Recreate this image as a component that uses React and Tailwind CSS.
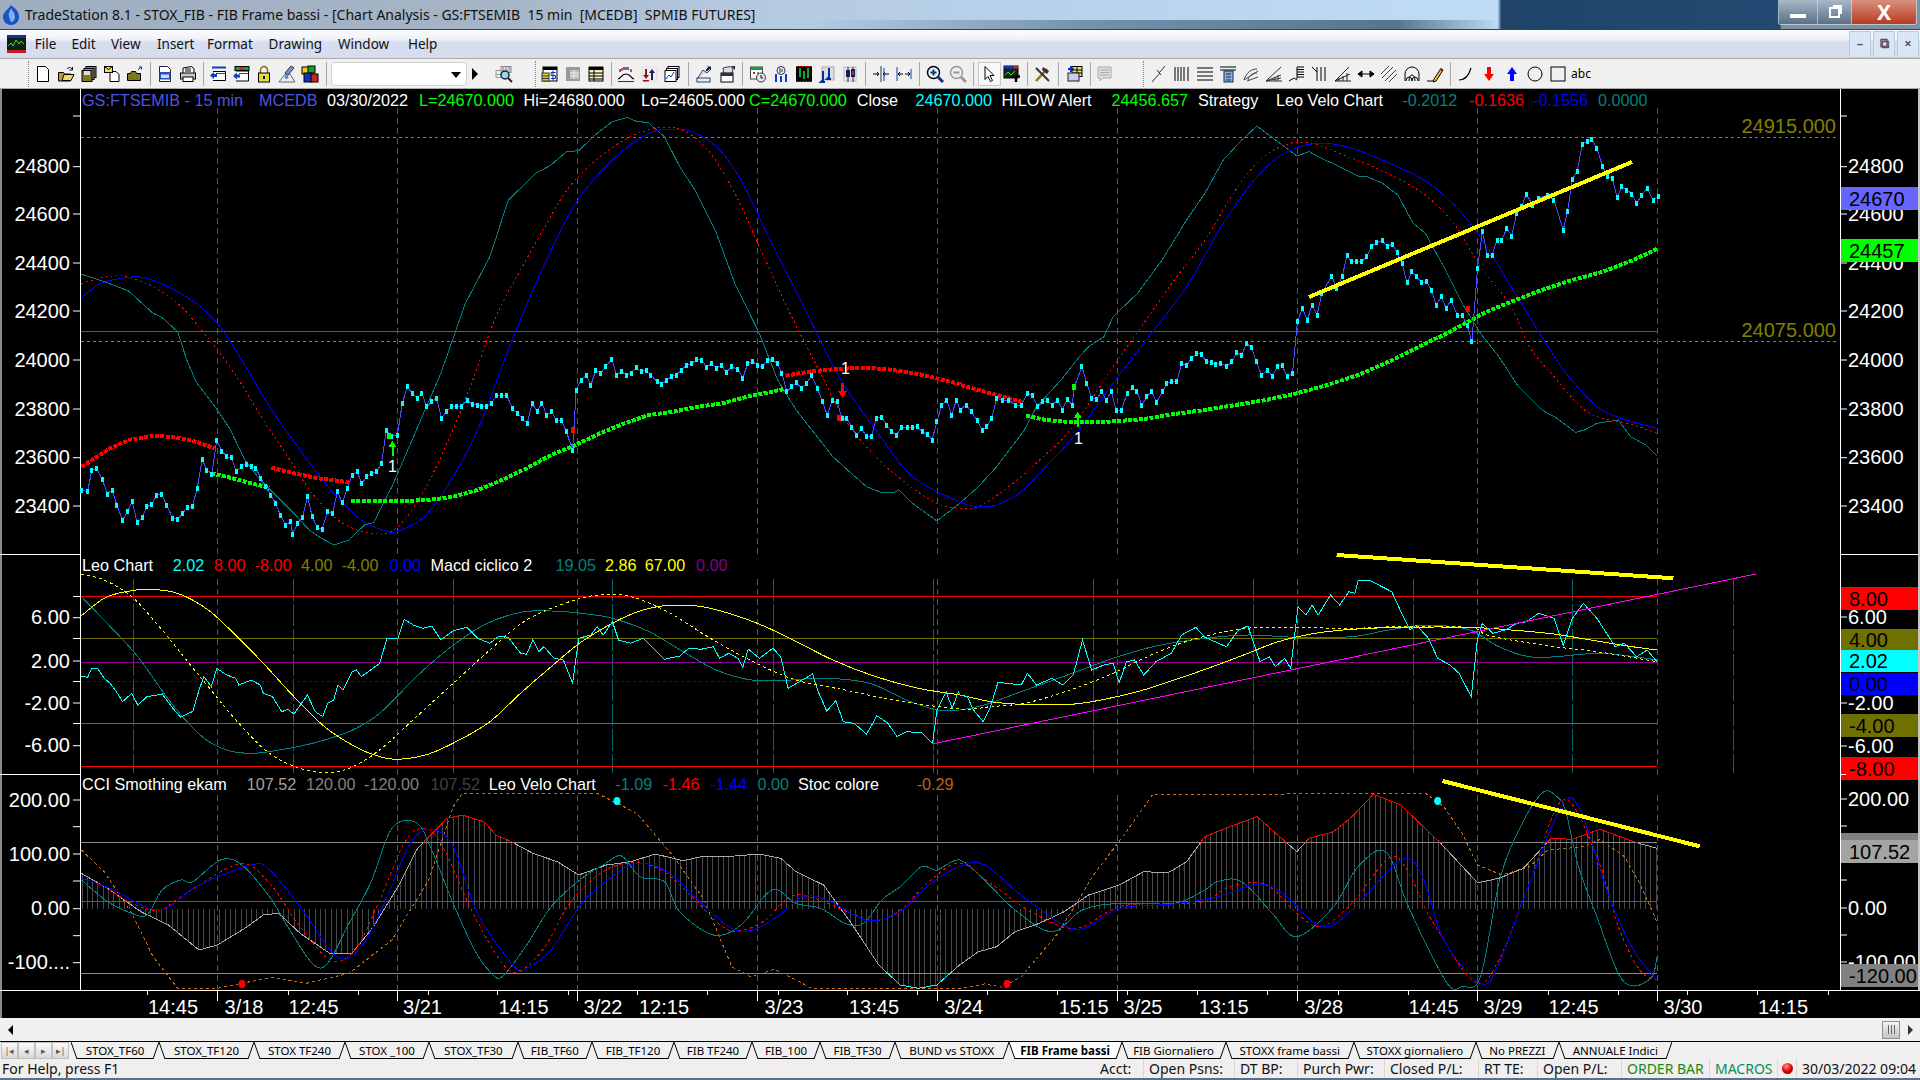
import React from 'react';

// chart traces, read off the reference as [u, v] pairs per half of the window
const toPts = (left, right, y0) => {
  const out = [];
  for (let i = 0; i < left.length; i += 2) out.push([left[i] / 1.633, y0 + left[i + 1] / 3]);
  for (let i = 0; i < right.length; i += 2) out.push([960 + right[i] / 1.633, y0 + right[i + 1] / 3]);
  return out;
};
const line = (p) => p.map((q) => q[0].toFixed(1) + ',' + q[1].toFixed(1)).join(' ');
const smooth = (p) => {
  let d = `M${p[0][0]} ${p[0][1]}`;
  for (let i = 0; i < p.length - 1; i++) {
    const a = p[Math.max(i - 1, 0)], b = p[i], c = p[i + 1], e = p[Math.min(i + 2, p.length - 1)];
    d += `C${b[0] + (c[0] - a[0]) / 6} ${b[1] + (c[1] - a[1]) / 6} ${c[0] - (e[0] - b[0]) / 6} ${c[1] - (e[1] - b[1]) / 6} ${c[0]} ${c[1]}`;
  }
  return d;
};

const Y1 = 90, Y2 = 550;

const tealTop = toPts(
  [133,553,175,578,210,603,250,670,265,683,290,725,305,810,320,875,355,960,375,1015,400,1110,425,1170,450,1215,480,1270,505,1320,525,1345,545,1365,570,1350,595,1305,610,1298,640,1190,680,1020,720,850,760,640,800,500,830,330,850,295,875,250,900,225,925,185,945,182,975,130,1000,95,1025,82,1040,95,1058,97,1085,140,1110,230,1135,300,1170,430,1200,580,1240,730,1270,870,1300,960,1330,1030,1360,1100,1390,1150,1415,1190,1440,1208,1460,1208,1468,1200,1490,1240,1530,1293,1567,1240],
  [30,1190,60,1130,105,1020,125,950,165,870,195,800,210,770,235,740,250,680,290,610,330,510,370,390,400,310,430,210,460,150,485,108,515,150,550,198,570,185,590,205,620,230,650,258,665,260,690,280,715,315,740,400,760,430,790,530,820,640,850,730,880,800,910,885,950,960,975,985,1005,1027,1020,1020,1040,1000,1075,990,1095,1040,1120,1065,1138,1098], Y1);
const redTop = toPts(
  [133,580,175,560,205,560,250,590,290,640,320,700,355,780,390,870,430,990,470,1100,510,1210,560,1300,615,1332,650,1310,690,1210,730,1060,770,880,810,680,850,540,890,410,930,290,980,200,1030,140,1080,112,1120,125,1160,190,1200,310,1240,470,1290,670,1340,850,1380,990,1430,1100,1480,1180,1530,1240,1567,1255],
  [30,1250,80,1190,130,1110,180,1020,250,830,300,700,350,570,400,450,450,300,490,210,530,165,570,158,620,190,680,235,730,280,770,330,810,410,850,530,900,650,930,770,970,860,1020,960,1060,990,1100,1005,1138,1030], Y1);
const blueTop = toPts(
  [133,622,165,580,205,563,235,563,280,595,320,640,355,700,395,810,440,950,490,1080,540,1200,590,1290,630,1323,650,1323,690,1285,730,1190,780,1020,830,780,880,560,940,340,1000,210,1060,130,1100,118,1130,125,1170,170,1210,270,1260,460,1310,640,1370,860,1430,1020,1490,1160,1567,1235],
  [30,1250,60,1245,100,1205,140,1130,190,1030,250,880,300,760,370,590,430,400,490,250,540,180,590,160,640,175,720,235,770,285,820,370,860,470,900,590,950,740,990,850,1040,950,1080,985,1138,1015], Y1);
const price = toPts(
  [133,1200,143,1205,150,1140,158,1135,167,1168,175,1212,183,1200,191,1247,200,1290,208,1265,216,1235,224,1298,232,1283,240,1250,248,1243,256,1215,264,1212,272,1245,282,1285,290,1288,298,1270,306,1252,314,1250,322,1195,330,1108,338,1140,346,1152,354,1050,362,1083,370,1100,378,1103,386,1145,394,1130,402,1122,410,1130,418,1135,426,1165,434,1190,442,1215,450,1240,458,1275,466,1305,474,1295,478,1332,486,1300,494,1283,502,1220,510,1280,518,1313,526,1317,535,1265,543,1270,551,1205,559,1238,567,1195,575,1155,583,1145,591,1180,599,1160,607,1150,615,1145,623,1120,631,1020,639,1038,649,1035,657,940,665,890,673,910,681,925,689,910,697,950,705,935,713,925,721,985,729,965,737,950,745,950,753,950,763,930,771,943,779,945,787,950,795,950,803,940,811,915,819,915,827,915,837,955,845,970,853,985,861,1000,869,940,877,965,885,940,893,975,901,965,909,992,917,992,925,1025,935,1080,941,900,949,870,957,855,965,885,973,840,981,850,989,830,999,808,1007,855,1015,845,1023,855,1031,850,1039,832,1047,845,1055,840,1063,855,1073,875,1081,882,1089,870,1097,858,1105,855,1113,840,1121,825,1130,820,1138,808,1146,810,1154,832,1162,820,1170,835,1178,825,1186,848,1194,830,1205,838,1213,865,1221,820,1229,815,1237,825,1245,830,1253,810,1261,808,1269,820,1277,850,1285,905,1293,890,1301,878,1309,895,1317,880,1325,857,1335,895,1343,935,1351,975,1359,932,1367,935,1375,985,1383,985,1391,1012,1399,1035,1407,1015,1415,1040,1423,1040,1431,985,1440,982,1448,1005,1456,1025,1464,1035,1472,1012,1482,1012,1490,1012,1498,1010,1506,1025,1514,1032,1522,1050,1530,995,1538,945,1546,930,1554,975,1562,930],
  [0,960,10,945,18,965,28,990,36,1020,44,1010,52,985,60,925,70,930,80,930,90,945,100,945,110,910,118,915,127,950,135,935,143,932,151,945,159,930,167,960,175,928,183,945,187,890,199,830,207,880,215,925,223,928,231,905,239,930,247,905,255,962,263,962,273,910,281,893,289,905,297,945,305,920,313,905,321,937,330,905,338,880,346,873,354,875,362,820,370,827,378,805,386,790,394,793,402,815,410,817,418,822,426,820,436,830,444,815,452,788,460,795,468,760,476,773,484,815,492,855,502,840,510,858,518,830,526,825,534,860,543,850,551,695,559,655,567,690,575,645,583,675,591,610,607,558,615,595,624,560,632,497,640,515,648,515,656,515,664,500,672,470,680,458,690,452,698,470,706,462,714,488,722,520,730,578,738,545,746,560,754,578,762,575,770,600,778,645,786,620,794,655,802,630,812,675,820,675,828,705,836,755,845,535,853,425,861,495,869,495,877,450,885,450,893,415,901,438,909,370,917,350,925,312,935,345,945,325,960,315,970,330,985,420,992,365,1000,268,1008,243,1016,162,1024,155,1032,147,1040,175,1049,228,1057,260,1065,265,1073,322,1081,290,1089,300,1097,312,1105,340,1113,315,1122,295,1132,330,1140,320], Y1);
const greenA = toPts([345,1150,380,1165,410,1180,440,1193], [], Y1);
const greenB = toPts([573,1233,660,1233,700,1230,740,1220,780,1200,820,1170,860,1135,900,1095,940,1065,980,1030,1020,1000,1060,975,1100,965,1140,950,1180,940,1220,920,1260,905,1280,897], [], Y1);
const greenC = toPts([], [108,977,140,990,185,997,220,997,260,993,300,987,350,972,400,960,450,945,500,930,550,910,600,885,650,855,700,815,750,770,800,725,830,695,860,665,900,635,950,600,1000,570,1050,545,1100,510,1140,475], Y1);
const redA = toPts([133,1130,150,1110,180,1075,210,1050,240,1040,260,1038,290,1043,320,1055,350,1075], [], Y1);
const redB = toPts([443,1133,480,1150,520,1165,570,1177], [], Y1);
const redC = toPts([1283,857,1320,845,1360,838,1410,833,1450,838,1500,852,1540,870,1567,882], [0,885,50,910,100,935], Y1);

const yelSolid = toPts(
  [133,197,170,145,205,125,245,118,290,130,340,180,390,265,430,340,480,440,530,530,580,590,620,620,650,628,700,612,750,570,800,515,850,430,900,350,950,275,1010,210,1060,175,1110,165,1160,175,1230,215,1290,265,1360,330,1430,380,1500,415,1567,435],
  [50,455,100,463,180,463,230,450,290,425,350,390,420,345,470,310,520,275,580,250,640,238,720,232,830,232,900,240,970,252,1030,270,1090,288,1138,300], Y2);
const yelDash = toPts(
  [133,72,170,90,215,140,260,230,300,320,340,410,390,520,440,610,490,655,530,667,570,655,620,600,680,500,740,400,800,300,860,210,930,155,980,135,1030,140,1090,185,1160,265,1230,335,1300,390,1380,420,1460,450,1567,477],
  [50,470,110,458,180,420,250,370,300,325,360,280,420,250,480,233,560,233,640,235,720,230,830,232,860,255,900,270,970,290,1040,305,1138,335], Y2);
const tealMid = toPts(
  [133,140,175,220,225,320,280,460,330,560,370,600,410,610,450,602,510,580,570,545,620,490,680,380,730,300,790,225,850,187,900,183,950,190,1000,205,1060,245,1120,310,1170,360,1220,388,1270,392,1350,385,1420,400,1480,450,1530,480,1567,480],
  [40,465,100,425,180,372,250,325,320,288,400,265,470,255,550,262,640,260,700,240,760,226,830,238,880,290,940,322,1040,310,1100,320,1138,330], Y2);
const cyanMid = toPts(
  [133,378,143,382,150,355,160,357,170,385,180,400,190,425,200,455,215,430,225,465,240,440,265,432,280,470,295,502,315,484,325,420,333,380,345,410,354,355,370,375,385,385,390,405,410,390,425,405,430,430,445,440,460,485,470,478,480,492,502,435,515,485,527,500,535,460,545,450,552,405,560,420,575,365,582,360,590,380,605,360,620,340,632,265,650,265,660,208,675,225,690,235,705,228,720,270,740,242,762,232,780,265,800,280,815,258,830,262,850,310,860,313,870,270,880,305,888,290,905,325,920,330,935,400,945,265,965,255,975,230,985,255,1000,215,1010,270,1030,280,1050,265,1070,300,1085,328,1110,318,1125,295,1145,298,1165,290,1175,325,1190,310,1205,325,1213,352,1222,297,1240,325,1262,295,1275,320,1287,415,1310,390,1327,372,1335,420,1350,483,1365,452,1377,515,1395,520,1415,553,1432,497,1450,520,1465,560,1480,545,1505,548,1523,580,1530,480,1545,425,1555,475,1565,425],
  [0,435,12,440,22,480,38,515,50,470,62,397,100,405,110,370,125,405,150,385,168,405,185,375,200,270,215,360,235,345,250,340,260,398,272,335,285,330,300,375,320,335,345,310,362,255,385,232,400,262,435,290,455,240,470,228,490,335,505,320,515,350,530,325,540,355,552,170,565,195,575,165,585,195,605,135,620,165,635,125,645,130,650,92,670,92,705,125,725,205,735,240,745,225,765,265,780,325,800,345,815,370,835,440,845,265,853,220,870,250,890,240,910,220,925,215,945,190,970,205,985,285,1000,205,1018,160,1040,205,1070,290,1085,280,1105,320,1122,300,1138,335], Y2);

const cci = toPts(
  [133,970,180,1020,230,1085,275,1125,325,1200,355,1185,400,1135,430,1095,455,1090,490,1150,540,1212,575,1210,610,1130,650,1010,680,900,700,860,730,805,755,795,790,815,810,855,835,875,870,910,910,935,945,975,990,945,1030,935,1070,912,1115,932,1145,920,1200,918,1240,912,1275,925,1300,965,1345,1005,1390,1120,1435,1245,1470,1305,1500,1315,1530,1305,1567,1245],
  [30,1205,60,1190,90,1145,130,1120,170,1085,210,1035,260,1005,300,965,340,968,370,935,400,860,440,830,485,800,550,905,570,865,610,845,640,800,675,733,720,765,785,880,845,998,880,985,920,955,965,865,1000,868,1045,838,1105,878,1138,895], Y2);
const tealLow = toPts(
  [133,990,155,1025,180,1060,215,1090,240,1095,265,1020,295,990,315,995,360,930,395,945,440,1040,470,1130,510,1240,535,1240,570,1120,605,1000,640,835,680,818,705,900,740,1060,775,1200,800,1265,820,1280,860,1185,900,1070,950,985,985,945,1015,918,1045,980,1085,995,1110,1085,1165,1155,1210,1125,1250,1035,1270,1020,1300,1060,1340,1075,1380,1120,1410,1120,1440,1050,1470,1010,1505,950,1530,960,1567,930],
  [40,990,90,1080,150,1145,200,1080,260,1060,350,1060,400,1020,420,995,460,995,510,1090,550,1160,610,1070,650,950,695,905,730,1060,770,1215,800,1310,820,1310,850,1280,880,1000,910,850,950,730,975,740,990,790,1010,950,1040,1100,1075,1270,1100,1308,1130,1280,1138,1220], Y2);
const redLow = toPts(
  [133,985,170,1010,215,1060,260,1080,300,1035,390,942,440,1000,490,1130,540,1230,580,1200,620,1050,660,880,690,835,720,880,770,1080,820,1240,850,1262,890,1190,930,1060,980,970,1030,938,1080,960,1130,1040,1180,1130,1210,1142,1250,1110,1290,1040,1330,1045,1390,1090,1430,1112,1470,1080,1520,990,1567,940],
  [50,1000,120,1090,190,1135,260,1070,350,1060,400,1055,440,1010,500,1005,550,1090,590,1130,640,1060,700,925,730,960,770,1110,840,1295,880,1230,930,1000,985,750,1040,920,1075,1130,1110,1260,1138,1290], Y2);
const blueLow = toPts(
  [133,985,180,1015,260,1080,320,1010,410,945,440,960,490,1070,550,1220,590,1190,630,1050,670,880,705,838,740,890,780,1090,840,1250,860,1255,900,1200,950,1060,1000,980,1040,940,1090,965,1140,1050,1190,1130,1225,1142,1270,1100,1310,1040,1350,1050,1400,1100,1430,1112,1470,1085,1520,1000,1567,950],
  [40,945,110,1050,190,1138,260,1075,350,1062,420,1040,490,1002,530,1035,590,1130,640,1080,720,930,755,980,790,1170,850,1300,880,1240,930,1000,985,760,1015,790,1060,1040,1100,1200,1138,1290], Y2);
const stoc = toPts(
  [133,900,170,965,215,1090,250,1220,290,1315,355,1315,395,1300,445,1282,500,1300,570,1270,640,1170,700,990,740,770,755,730,975,730,1040,790,1100,920,1150,1050,1195,1250,1225,1280,1265,1258,1300,1290,1325,1315,1567,1315],
  [40,1302,70,1312,100,1280,160,1150,220,970,270,850,315,733,500,733,600,730,760,730,790,770,820,850,845,945,885,975,930,950,960,900,1020,890,1045,868,1085,920,1110,1000,1138,1115], Y2);

const histBars = () => {
  const bars = [];
  let j = 0;
  for (let x = 82; x < 1657; x += 5.3) {
    while (j < cci.length - 2 && cci[j + 1][0] < x) j++;
    const a = cci[j], b = cci[j + 1];
    const y = a[1] + ((b[1] - a[1]) * (x - a[0])) / (b[0] - a[0] || 1);
    bars.push([x, y]);
  }
  return bars;
};

const dayX = [217, 397, 577, 757, 937, 1117, 1297, 1477, 1657];
const tealX = [133, 293, 453, 612, 773, 933, 1093, 1253, 1413, 1572, 1733];

const legend1 = [
  [82, 'GS:FTSEMIB - 15 min', '#4f55e0'], [259, 'MCEDB', '#4f55e0'], [327, '03/30/2022', '#fff'], [419, 'L=24670.000', '#0f0'],
  [523.5, 'Hi=24680.000', '#fff'], [641, 'Lo=24605.000', '#fff'], [749, 'C=24670.000', '#0f0'], [856.7, 'Close', '#fff'],
  [915.5, '24670.000', '#0ff'], [1001.6, 'HILOW Alert', '#fff'], [1111.4, '24456.657', '#0f0'], [1198, 'Strategy', '#fff'],
  [1276, 'Leo Velo Chart', '#fff'], [1402.4, '-0.2012', '#008080'], [1469, '-0.1636', '#f00'], [1533, '-0.1556', '#00f'], [1598, '0.0000', '#008080'],
];
const legend2 = [
  [82, 'Leo Chart', '#fff'], [172.7, '2.02', '#0ff'], [214, '8.00', '#f00'], [254.7, '-8.00', '#f00'], [301, '4.00', '#808000'],
  [341.7, '-4.00', '#808000'], [389.5, '0.00', '#00f'], [430.5, 'Macd ciclico 2', '#fff'], [555.4, '19.05', '#008080'],
  [605, '2.86', '#ff0'], [644.8, '67.00', '#ff0'], [696, '0.00', '#800080'],
];
const legend3 = [
  [82, 'CCI Smothing ekam', '#fff'], [246.8, '107.52', '#a0a0a0'], [306, '120.00', '#808080'], [364, '-120.00', '#808080'],
  [430.5, '107.52', '#404040'], [488.7, 'Leo Velo Chart', '#fff'], [615.4, '-1.09', '#008080'], [662.6, '-1.46', '#f00'],
  [710, '-1.44', '#00f'], [757.5, '0.00', '#008080'], [798, 'Stoc colore', '#fff'], [916.7, '-0.29', '#c06010'],
];

const Legend = ({ items, y }) => items.map((t, i) => <text key={i} x={t[0]} y={y} fontSize="16.2" fill={t[2]}>{t[1]}</text>);
const AxisL = ({ items }) => items.map((t, i) => (
  <g key={i}>
    <text x="70" y={t[1] + 6.5} fontSize="20" fill="#fff" textAnchor="end">{t[0]}</text>
    <line x1="73" x2="80" y1={t[1]} y2={t[1]} stroke="#fff" />
  </g>
));
const AxisR = ({ items }) => items.map((t, i) => (
  <g key={i}>
    <line x1="1840" x2="1847" y1={t[1]} y2={t[1]} stroke="#fff" />
    {t[0] && <text x="1848" y={t[1] + 6.5} fontSize="20" fill="#fff">{t[0]}</text>}
  </g>
));
const Box = ({ y, h, fill, children, ink = '#000' }) => (
  <g>
    <rect x="1841" y={y} width="77" height={h} fill={fill} />
    <text x="1849" y={y + h / 2 + 7} fontSize="20" fill={ink}>{children}</text>
  </g>
);
const Dots = ({ p, color }) => <polyline points={line(p)} fill="none" stroke={color} strokeWidth="4" strokeDasharray="4 1.4" />;
const Grid = ({ y1, y2 }) => dayX.map((x) => <line key={x} x1={x} x2={x} y1={y1} y2={y2} stroke="#555" strokeDasharray="6 4" />);
const Hline = ({ y, c, x2 = 1657, dash }) => <line x1="81" x2={x2} y1={y} y2={y} stroke={c} strokeDasharray={dash} />;
const Arrow = ({ x, y, up, c }) => (
  <path d={up ? `M${x} ${y}l-4 6h3v9h2v-9h3z` : `M${x} ${y + 15}l-4.5 -7h3v-8h3v8h3z`} fill={c} />
);
const Mark = ({ x, y, c }) => <rect x={x - 2} y={y - 3} width="4" height="6" fill={c} />;
const Edges = ({ y, h }) => (
  <>
    <rect x="0" y={y} width="2" height={h} fill="#8a8a8a" />
    <rect x="1918" y={y} width="2" height={h} fill="#c8c8c8" />
    <line x1="80" x2="80" y1={y} y2={y + h} stroke="#fff" />
    <line x1="1840" x2="1840" y1={y} y2={y + h} stroke="#fff" />
  </>
);

function PricePane() {
  return (
    <svg className="block h-[466px] w-full shrink-0" viewBox="0 89 1920 466" shapeRendering="crispEdges">
      <Edges y={89} h={466} />
      <Grid y1={108} y2={555} />
      <Hline y={137.5} c="#8a8a00" x2={1836} dash="3 3" />
      <Hline y={341.5} c="#8a8a00" x2={1836} dash="3 3" />
      <Hline y={331.5} c="#008080" />
      <polyline points={line(tealTop)} fill="none" stroke="#008080" />
      <path d={smooth(redTop)} fill="none" stroke="#f00" strokeDasharray="2 3" />
      <path d={smooth(blueTop)} fill="none" stroke="#0000ff" />
      <Dots p={greenA} color="#0f0" />
      <Dots p={greenB} color="#0f0" />
      <Dots p={greenC} color="#0f0" />
      <Dots p={redA} color="#f00" />
      <Dots p={redB} color="#f00" />
      <Dots p={redC} color="#f00" />
      <polyline points={line(price)} fill="none" stroke="#4a4aff" />
      {price.map((q, i) => <rect key={i} x={q[0] - 1.5} y={q[1] - 2.5} width="3" height="5" fill="#0ff" />)}
      <line x1="1309" y1="297" x2="1632" y2="162" stroke="#ff0" strokeWidth="4" />
      <Arrow x={392.5} y={441} up c="#0f0" />
      <Arrow x={1077.6} y={412} up c="#0f0" />
      <Arrow x={842.6} y={383} c="#f00" />
      <Mark x={389} y={436} c="#0f0" />
      <Mark x={1074} y={387} c="#0f0" />
      <Mark x={839} y={418} c="#f00" />
      <Mark x={1468} y={309} c="#f00" />
      <Mark x={572.6} y={430} c="#f00" />
      <g shapeRendering="auto">
        <text x="388" y="472" fontSize="16" fill="#fff">1</text>
        <text x="1074" y="444" fontSize="16" fill="#fff">1</text>
        <text x="841" y="374" fontSize="16" fill="#fff">1</text>
        <Legend items={legend1} y={105.5} />
        <text x="1836" y="133" fontSize="20" fill="#808000" textAnchor="end">24915.000</text>
        <text x="1836" y="337" fontSize="20" fill="#808000" textAnchor="end">24075.000</text>
        <AxisL items={[['24800', 166.7], ['24600', 214], ['24400', 263], ['24200', 311], ['24000', 360], ['23800', 409], ['23600', 457.7], ['23400', 506], ['', 116]]} />
        <AxisR items={[['24800', 166.7], ['24600', 214], ['24400', 263], ['24200', 311], ['24000', 360], ['23800', 409], ['23600', 457.7], ['23400', 506], ['', 116]]} />
        <Box y={187} h={23} fill="#6666ff">24670</Box>
        <Box y={239} h={23} fill="#00ff00">24457</Box>
      </g>
      <line x1="0" x2="80" y1="554.5" y2="554.5" stroke="#fff" />
      <line x1="1840" x2="1918" y1="554.5" y2="554.5" stroke="#fff" />
    </svg>
  );
}

function MacdPane() {
  return (
    <svg className="block h-[220px] w-full shrink-0 overflow-visible" viewBox="0 555 1920 220" shapeRendering="crispEdges">
      <Edges y={555} h={220} />
      <Grid y1={579} y2={775} />
      {tealX.map((x) => <line key={x} x1={x} x2={x} y1={579} y2={773} stroke="#006a6a" strokeDasharray="22 3" />)}
      <Hline y={596.5} c="#f00" />
      <Hline y={638.5} c="#707000" />
      <Hline y={662.5} c="#900090" />
      <Hline y={681.5} c="#0000ff" dash="3 3" />
      <Hline y={723.5} c="#707000" />
      <Hline y={766.5} c="#f00" />
      <path d={smooth(tealMid)} fill="none" stroke="#008080" />
      <path d={smooth(yelSolid)} fill="none" stroke="#ff0" />
      <path d={smooth(yelDash)} fill="none" stroke="#ff0" strokeDasharray="3 3" />
      <polyline points={line(cyanMid)} fill="none" stroke="#0ff" />
      <line x1="932" y1="744" x2="1756" y2="574" stroke="#f0f" />
      <line x1="1336.6" y1="555" x2="1673.4" y2="578.3" stroke="#ff0" strokeWidth="4" />
      <g shapeRendering="auto">
        <Legend items={legend2} y={571} />
        <AxisL items={[['6.00', 617.7], ['2.00', 661], ['-2.00', 703], ['-6.00', 745.7], ['', 596.5], ['', 638.5], ['', 681.5], ['', 723.5]]} />
        <AxisR items={[['6.00', 617], ['-2.00', 703], ['-6.00', 746]]} />
        <Box y={587} h={23} fill="#f00">8.00</Box>
        <Box y={629} h={21} fill="#707000">4.00</Box>
        <Box y={650} h={22} fill="#0ff">2.02</Box>
        <Box y={673} h={22} fill="#00f">0.00</Box>
        <Box y={714} h={23} fill="#707000">-4.00</Box>
        <Box y={757} h={23} fill="#f00">-8.00</Box>
      </g>
      <line x1="0" x2="80" y1="774.5" y2="774.5" stroke="#fff" />
      <line x1="1840" x2="1846" y1="774.5" y2="774.5" stroke="#fff" />
    </svg>
  );
}

function CciPane() {
  return (
    <svg className="block h-[215px] w-full shrink-0" viewBox="0 775 1920 215" shapeRendering="crispEdges">
      <defs>
        <clipPath id="above"><rect x="0" y="775" width="1920" height="67.7" /></clipPath>
        <clipPath id="below"><rect x="0" y="973" width="1920" height="20" /></clipPath>
      </defs>
      <Edges y={775} h={215} />
      <Grid y1={795} y2={990} />
      {histBars().map((b, i) => <line key={i} x1={b[0]} x2={b[0]} y1={908.7} y2={b[1]} stroke="#484848" />)}
      <Hline y={842.5} c="#8a8a8a" />
      <Hline y={973.5} c="#8a8a8a" />
      <Hline y={901.5} c="#008080" />
      <polyline points={line(stoc)} fill="none" stroke="#d06a10" strokeDasharray="3 3" />
      <polyline points={line(cci)} fill="none" stroke="#a8a8a8" />
      <polyline points={line(cci)} fill="none" stroke="#f00" clipPath="url(#above)" />
      <polyline points={line(cci)} fill="none" stroke="#0ff" clipPath="url(#below)" />
      <path d={smooth(tealLow)} fill="none" stroke="#008080" />
      <path d={smooth(redLow)} fill="none" stroke="#f00" strokeDasharray="3 3" />
      <path d={smooth(blueLow)} fill="none" stroke="#0000ff" />
      <line x1="1442.5" y1="781" x2="1699.7" y2="846.3" stroke="#ff0" strokeWidth="4" />
      <g shapeRendering="auto">
        <ellipse cx="617" cy="801" rx="3.5" ry="4" fill="#0ff" />
        <ellipse cx="1437.7" cy="801" rx="3.5" ry="4" fill="#0ff" />
        <ellipse cx="242" cy="984" rx="3.5" ry="4" fill="#f00" />
        <ellipse cx="1007" cy="984" rx="3.5" ry="4" fill="#f00" />
        <Legend items={legend3} y={790} />
        <AxisL items={[['200.00', 800], ['100.00', 854], ['0.00', 908.7], ['-100....', 962.7], ['', 826.7], ['', 881], ['', 935.7]]} />
        <AxisR items={[['200.00', 799], ['', 826], ['', 880], ['0.00', 908], ['', 935], ['-100.00', 962]]} />
        <rect x="1841" y="833" width="77" height="7" fill="#808080" />
        <Box y={840} h={23} fill="#a4a4a4">107.52</Box>
        <Box y={964} h={23} fill="#808080">-120.00</Box>
      </g>
    </svg>
  );
}

const timeTicks = [147, 217, 288, 358, 397, 428, 497, 568, 577, 637, 707, 757, 778, 847, 917, 937, 987, 1057, 1117, 1127, 1197, 1267, 1297, 1338, 1408, 1477, 1548, 1618, 1657, 1687, 1757, 1828];
const timeLabels = [['14:45', 173], ['3/18', 244], ['12:45', 313.5], ['3/21', 422.5], ['14:15', 523.6], ['3/22', 603], ['12:15', 664], ['3/23', 784], ['13:45', 874], ['3/24', 963.7], ['15:15', 1083.7], ['3/25', 1143], ['13:15', 1223.7], ['3/28', 1323.7], ['14:45', 1433.5], ['3/29', 1503], ['12:45', 1573.5], ['3/30', 1683], ['14:15', 1783]];

function TimeAxis() {
  return (
    <svg className="block h-[28px] w-full shrink-0" viewBox="0 990 1920 28">
      <rect x="0" y="990" width="2" height="28" fill="#8a8a8a" />
      <line x1="0" x2="1920" y1="990.5" y2="990.5" stroke="#fff" />
      {timeTicks.map((x) => <line key={x} x1={x} x2={x} y1="990" y2={dayX.includes(x) ? 1001 : 995} stroke="#fff" shapeRendering="crispEdges" />)}
      {timeLabels.map((t, i) => <text key={i} x={t[1]} y="1014" fontSize="20" fill="#fff" textAnchor="middle">{t[0]}</text>)}
    </svg>
  );
}

// toolbar glyphs, 18x18
const S = { fill: 'none', stroke: '#000' };
const icons = {
  newDoc: <><path d="M3.5 1.5h8l3 3v12h-11z" fill="#fff" stroke="#000" /></>,
  open: <><path d="M1.5 7.5h5l1 1.5h6v7h-12z" fill="#b8a030" stroke="#000" /><path d="M5 15.5l2-6h10l-3 6z" fill="#e8d870" stroke="#000" /><path d="M10 4c2-2 4-2 5 0M15.5 2v3h-3" {...S} /></>,
  saveAll: <><rect x="6" y="1.5" width="10" height="11" fill="#888" stroke="#000" /><rect x="4" y="3.5" width="10" height="11" fill="#999" stroke="#000" /><rect x="2" y="5.5" width="10" height="11" fill="#807820" stroke="#000" /><rect x="4" y="6" width="6" height="4" fill="#ddd" /></>,
  docs: <><path d="M7 6.5h6l3 3v7H7z" fill="#fff" stroke="#000" /><rect x="1.5" y="1.5" width="8" height="6" fill="#f0e060" stroke="#000" /><path d="M1.5 1.5l4 3 4-3" {...S} /></>,
  box: <><path d="M1.5 8.500h3l1-2h4l1 2h4v7h-13z" fill="#807820" stroke="#000" /><path d="M12 5l3-3M13 2h2.5v2.5" fill="none" stroke="#0030c0" /></>,
  preview: <><path d="M3.5 1.500h8l3 3v12h-11z" fill="#fff" stroke="#223" /><rect x="3.500" y="7" width="11" height="7.500" fill="#2a50c0" /><rect x="5" y="9.500" width="8" height="3.500" fill="#cde" /></>,
  print: <><path d="M4 8V3l8-1.5 3 2V8" fill="#fff" stroke="#000" /><rect x="1.5" y="8" width="15" height="6" fill="#c8c8c8" stroke="#000" /><rect x="4" y="12" width="10" height="4.5" fill="#fff" stroke="#000" /><path d="M6 4h6M6 6h6" stroke="#000" /></>,
  lines: <><path d="M3 2.5h14" stroke="#1040c0" strokeWidth="2" /><path d="M4 6.500h12.500v9H4" fill="#fff" stroke="#000" /><path d="M7 8.500h9" stroke="#1040c0" /><path d="M1 10.500l4-3.500v2h3v3H5v2z" fill="#1040c0" /></>,
  lines2: <><rect x="3" y="1.500" width="14" height="4" fill="#10a040" stroke="#000" /><rect x="8" y="2" width="4" height="3" fill="#e02020" /><path d="M4 6h12.500v10H4" fill="#fff" stroke="#000" /><path d="M7 8.500h9" stroke="#1040c0" /><path d="M1 11l4-3.500v2h3v3H5v2z" fill="#1040c0" /></>,
  lock: <><path d="M5.5 8V5a3.5 3.5 0 0 1 7 0v3" fill="none" stroke="#807010" strokeWidth="1.5" /><rect x="3.5" y="8" width="11" height="9" fill="#e8d840" stroke="#000" /><rect x="8" y="11" width="2" height="3" fill="#000" /></>,
  pen: <><path d="M1 17L7 9h5l5 8z" fill="#eee" stroke="#667" /><path d="M7 8l6-7 3 2-6 7z" fill="#8090c0" stroke="#334" /><circle cx="8.500" cy="12" r="2" fill="#58c" /></>,
  cubes: <><rect x="1" y="2" width="7" height="7" fill="#e8d020" stroke="#000" /><rect x="7" y="1" width="7" height="7" fill="#10a030" stroke="#000" /><rect x="3" y="8" width="8" height="9" fill="#1030c0" stroke="#000" /><rect x="10" y="9" width="7" height="8" fill="#d02020" stroke="#000" /></>,
  search: <><path d="M1 5.500h7M1 9.500h7M1 5.500v7h7" fill="none" stroke="#999" /><rect x="6" y="1.500" width="10" height="6" fill="#ddd" stroke="#889" /><path d="M8 2v5M11 2v5M14 2v5" stroke="#889" /><circle cx="10" cy="10" r="4" fill="#8fd8f0" stroke="#222" strokeWidth="1.500" /><path d="M13 13l4 4" stroke="#222" strokeWidth="2" /></>,
  dollar: <><rect x="2" y="2" width="14" height="14" fill="#fff" stroke="#000" /><rect x="2" y="2" width="14" height="3" fill="#000" /><rect x="1" y="8" width="7" height="8" fill="#e8d020" stroke="#333" /><path d="M1 11h7M1 13.500h7" stroke="#333" /><path d="M12 5.500v10M14.500 7.500h-4.500v3h4.500v3h-4.500" fill="none" stroke="#0030c0" /></>,
  grayTable: <><rect x="2" y="2" width="14" height="14" fill="#999" /><rect x="6" y="5" width="9" height="9" fill="#bbb" /><path d="M6 8h9M6 11h9M10 5v9" stroke="#eee" /></>,
  table: <><rect x="2" y="2" width="14" height="14" fill="#f4f0c0" stroke="#000" /><rect x="2" y="2" width="14" height="3" fill="#000" /><path d="M2 8h14M2 11h14M2 14h14M7 5v11" stroke="#000" /></>,
  bars: <><rect x="1.500" y="2" width="15" height="14" fill="#f4f4f4" /><path d="M1 13c3 0 3-5 8-5s5 5 8 5" transform="translate(0 1)" fill="none" stroke="#000" strokeWidth="1.200" /><path d="M3 4v3M7 2v3M11 2v3" stroke="#1040d0" strokeWidth="1.500" /><path d="M5 3v3M9 2v3M14 4v3" stroke="#d01010" strokeWidth="1.500" /><path d="M1 16.500h16" stroke="#333" /></>,
  arrowsV: <><rect x="2" y="2" width="15" height="14" fill="#eee" stroke="#ddd" /><path d="M6 4v7" stroke="#a01010" strokeWidth="2" /><path d="M3 10l3 4 3-4z" fill="#a01010" /><rect x="3" y="15" width="6" height="1.500" fill="#a01010" /><path d="M12 15V8" stroke="#102060" strokeWidth="2" /><path d="M9 8l3-4 3 4z" fill="#102060" /></>,
  windows: <><rect x="5" y="1.5" width="11" height="11" fill="#fff" stroke="#000" /><rect x="3.5" y="3.5" width="11" height="11" fill="#fff" stroke="#000" /><rect x="2" y="5.5" width="11" height="11" fill="#fff" stroke="#000" /><path d="M3 14l3-4 2 2 3-5" stroke="#1040c0" fill="none" /></>,
  chartAdd: <><path d="M2 14l6-9 4 3 4-4" fill="#ddd" stroke="#445" /><path d="M12 1.5h4v4l-1.5-1.5L12 6.5 10.5 5 13 2.5z" fill="#123" /><rect x="2" y="13" width="13" height="4" fill="#def" stroke="#246" /></>,
  chartBox: <><path d="M5 3l7-1.5L15 4l-1 4-8 2z" fill="#ddd" stroke="#345" /><rect x="3" y="8" width="12" height="9" fill="#fff" stroke="#000" /><rect x="3" y="8" width="12" height="3" fill="#333" /><path d="M13 1h4v4z" fill="#123" /></>,
  clock: <><rect x="1.5" y="2" width="12" height="12" fill="#fff" stroke="#444" /><rect x="1.5" y="2" width="12" height="3" fill="#10a040" /><rect x="4" y="7" width="2" height="2" fill="#d02020" /><rect x="8" y="7" width="2" height="2" fill="#888" /><circle cx="12" cy="12.5" r="4.5" fill="#e8e8e8" stroke="#333" /><path d="M12 10v3h2" {...S} /></>,
  mag2: <><circle cx="9" cy="5.5" r="4" fill="#eee" stroke="#334" /><path d="M8 3v5M10 4v3" stroke="#334" /><path d="M4 9v8M9 11v6M14 9v8" stroke="#1040c0" strokeWidth="2" /></>,
  black: <><rect x="1" y="1" width="16" height="16" fill="#000" /><path d="M1 1.500h16M1 16.500h16" stroke="#e01010" strokeDasharray="2 1" /><path d="M5 3v9M9 6v8M13 3v10" stroke="#10e040" strokeWidth="1.500" /></>,
  notes: <><rect x="4" y="2" width="12" height="13" fill="#ddd" stroke="#aaa" /><path d="M5 6v10M5 15l-2 2h4M11 3v10M11 12l-2 2h4" stroke="#0030a0" strokeWidth="2" fill="none" /></>,
  candles: <><rect x="3" y="2" width="12" height="14" fill="#e8e8e8" stroke="#bbb" /><path d="M7 2v15M12 2v15" stroke="#102060" /><rect x="5" y="5" width="4" height="7" fill="#102060" /><rect x="10" y="4" width="4" height="8" fill="#102060" /><rect x="11" y="6" width="2" height="4" fill="#d02020" /></>,
  squeeze: <><path d="M9 1v16" stroke="#334" /><path d="M1 9h6M5 7l2 2-2 2M17 9h-6M13 7l-2 2 2 2" fill="none" stroke="#000" /><path d="M12 3v13" stroke="#1040c0" /></>,
  expand: <><path d="M2 2v14M16 4v10" stroke="#1040c0" /><path d="M3 9h5M5 7l-2 2 2 2M15 9h-5M13 7l2 2-2 2" fill="none" stroke="#000" /></>,
  zoomIn: <><circle cx="7.5" cy="7.5" r="6" fill="#eaf6ff" stroke="#000" strokeWidth="1.5" /><path d="M4.5 7.5h6M7.5 4.5v6" stroke="#103080" strokeWidth="2" /><path d="M12 12l5 5" stroke="#103080" strokeWidth="3" /></>,
  zoomOut: <><circle cx="7.5" cy="7.5" r="6" fill="#eee" stroke="#999" strokeWidth="1.5" /><path d="M4.5 7.5h6" stroke="#999" strokeWidth="2" /><path d="M12 12l5 5" stroke="#999" strokeWidth="3" /></>,
  cursor: <path d="M5 1.5v13l3-3 2.5 5 2-1-2.5-5h4z" fill="#fff" stroke="#000" />,
  chartText: <><rect x="1" y="1" width="14" height="12" fill="#102810" stroke="#000" /><rect x="1" y="1" width="14" height="2.500" fill="#1030c0" /><rect x="11" y="1" width="4" height="2.500" fill="#d02020" /><path d="M2 10l3-3 3 3 4-4" stroke="#30e050" fill="none" /><path d="M9 11.500h8M13 11.500V17" stroke="#000" strokeWidth="2.500" /></>,
  tools: <><path d="M3 16L14 4" stroke="#a07020" strokeWidth="2.5" /><path d="M3 3l13 13" stroke="#333" strokeWidth="2" /><path d="M10 2l6 4-2 3-5-4z" fill="#333" /></>,
  plusTable: <><rect x="6" y="1.5" width="10" height="10" fill="#f4e060" stroke="#000" /><path d="M6 5h10M6 8h10M11 1.5v10" stroke="#000" /><rect x="2" y="8" width="11" height="8" fill="#cce" stroke="#123" /><path d="M5 1v6M2 4h6" stroke="#0030c0" strokeWidth="2" /></>,
  note: <><path d="M2 2h13v11H7l-3 3v-3H2z" fill="#ddd" stroke="#aaa" /><path d="M4 5h9M4 7.5h9M4 10h9" stroke="#aaa" /></>,
  trend: <><path d="M2 17l8-9M9 8l6-7" stroke="#333" /><path d="M7 5l4 5" stroke="#333" /></>,
  vlines: <path d="M2 2v14M5 2v14M8 2v14M11 2v14M15 2v14" stroke="#000" />,
  hlines: <path d="M1 3h16M1 7h16M1 11h16M1 15h16" stroke="#000" />,
  calc: <><path d="M1 2h16M1 5h16" stroke="#000" /><rect x="5" y="6" width="9" height="11" fill="#9ac" stroke="#036" /><path d="M7 9h5M7 12h5M7 15h5" stroke="#036" /></>,
  arc: <path d="M2 15C4 8 9 4 15 4M6 15C7 11 10 8 15 8M2 15l14-9M5 16l11-4" fill="none" stroke="#444" />,
  wedge: <path d="M1 16h16M1 16L16 2M1 16l15-6M1 16l15-3M10 12v4M13 10v6" fill="none" stroke="#333" />,
  fibBars: <><path d="M1 16l5-3 3 2" fill="none" stroke="#000" /><path d="M9 2h7M9 4.5h7M9 7h7M9 9.5h7M9 12h7M9 2v12" stroke="#000" /></>,
  vfib: <path d="M1 2l5 5M6 2v14M10 2v14M14 2v14" fill="none" stroke="#000" />,
  angles: <path d="M1 16h16M1 16L15 2M1 16l15-7M5 16v-3M9 16v-5M13 16v-8" fill="none" stroke="#222" />,
  measure: <path d="M1 9h16M1 9l4-3v6zM17 9l-4-3v6z" fill="#000" stroke="#000" />,
  parallel: <path d="M2 13L13 2M5 16L16 5M1 9l8-8M9 17l8-8" fill="none" stroke="#444" />,
  gann: <><path d="M2 16V9a7 7 0 0 1 14 0v7" fill="none" stroke="#000" /><path d="M3 16a3 4 0 0 1 6 0 3 4 0 0 1 6 0M6 16a3 6 0 0 1 6 0" fill="none" stroke="#000" /></>,
  pencil: <><path d="M1 16h9" stroke="#000" /><path d="M8 14l-1 3 3-1 7-11-2-1.5z" fill="#e8d020" stroke="#000" /><path d="M13.5 5l2 1.5 1-2-2-1.5z" fill="#a03030" /></>,
  curve: <path d="M2 15c6 0 10-5 12-12" fill="none" stroke="#000" strokeWidth="1.2" />,
  down: <path d="M7 2h4v7h3l-5 7-5-7h3z" fill="#f00" />,
  up: <path d="M7 16h4V9h3L9 2 4 9h3z" fill="#00f" />,
  circle: <circle cx="9" cy="9" r="7" fill="none" stroke="#000" />,
  square: <rect x="2" y="2" width="14" height="14" fill="none" stroke="#000" />,
};

const Ic = ({ n, pressed }) => (
  <div className={`flex h-[24px] w-[23px] shrink-0 items-center justify-center ${pressed ? 'border border-[#c8c8c8] bg-[#f8f8f8]' : ''}`}>
    <svg width="18" height="18" viewBox="0 0 18 18">{icons[n]}</svg>
  </div>
);
const Sep = ({ w }) => (
  <div className={`flex h-[24px] shrink-0 justify-center ${w}`}><div className="h-full w-px bg-[#a8a8a8]" /></div>
);
const Grip = ({ w }) => (
  <div className={`flex h-[26px] shrink-0 justify-center ${w}`}><div className="h-full w-px border-l border-dotted border-[#888]" /></div>
);

function Toolbar() {
  return (
    <div className="flex h-[31px] shrink-0 items-center border-y border-[#a9a9a9] bg-[#f0f0f0] pl-[25px]">
      <Grip w="w-[6.5px]" />
      {['newDoc', 'open', 'saveAll', 'docs', 'box'].map((n) => <Ic key={n} n={n} />)}
      <Sep w="w-[7px]" />
      {['preview', 'print'].map((n) => <Ic key={n} n={n} />)}
      <Sep w="w-[7px]" />
      {['lines', 'lines2', 'lock', 'pen', 'cubes'].map((n) => <Ic key={n} n={n} />)}
      <Sep w="w-[9px]" />
      <div className="relative h-[24px] w-[136px] shrink-0 rounded-sm border border-[#d0d0d0] bg-white">
        <div className="absolute right-[5px] top-[9px] h-0 w-0 border-x-[5px] border-t-[6px] border-x-transparent border-t-black" />
      </div>
      <div className="ml-[5px] h-0 w-0 shrink-0 border-y-[6px] border-l-[6px] border-y-transparent border-l-black" />
      <div className="w-[15px] shrink-0" />
      <Ic n="search" />
      <div className="w-[17px] shrink-0" />
      <Grip w="w-[6px]" />
      {['dollar', 'grayTable', 'table'].map((n) => <Ic key={n} n={n} />)}
      <Sep w="w-[7px]" />
      {['bars', 'arrowsV', 'windows'].map((n) => <Ic key={n} n={n} />)}
      <Sep w="w-[9px]" />
      {['chartAdd', 'chartBox'].map((n) => <Ic key={n} n={n} />)}
      <Sep w="w-[8px]" />
      {['clock', 'mag2', 'black', 'notes', 'candles'].map((n) => <Ic key={n} n={n} />)}
      <Sep w="w-[8px]" />
      {['squeeze', 'expand'].map((n) => <Ic key={n} n={n} />)}
      <Sep w="w-[8px]" />
      {['zoomIn', 'zoomOut'].map((n) => <Ic key={n} n={n} />)}
      <Sep w="w-[8px]" />
      <Ic n="cursor" pressed />
      <Ic n="chartText" />
      <Sep w="w-[7px]" />
      <Ic n="tools" />
      <Sep w="w-[10px]" />
      <Ic n="plusTable" />
      <Sep w="w-[7px]" />
      <Ic n="note" />
      <div className="w-[23px] shrink-0" />
      <Grip w="w-[8px]" />
      {['trend', 'vlines', 'hlines', 'calc', 'arc', 'wedge', 'fibBars', 'vfib', 'angles', 'measure', 'parallel', 'gann', 'pencil'].map((n) => <Ic key={n} n={n} />)}
      <Sep w="w-[8px]" />
      {['curve', 'down', 'up', 'circle', 'square'].map((n) => <Ic key={n} n={n} />)}
      <div className="flex h-[24px] w-[23px] shrink-0 items-center justify-center text-[12px] text-black">abc</div>
    </div>
  );
}

const menus = [['File', 'w-[36.7px]'], ['Edit', 'w-[39.6px]'], ['View', 'w-[46px]'], ['Insert', 'w-[50px]'], ['Format', 'w-[61.6px]'], ['Drawing', 'w-[69.4px]'], ['Window', 'w-[70px]'], ['Help', 'w-[40px]']];

function MenuBar() {
  return (
    <div className="flex h-[29px] shrink-0 items-center border-t border-[#404040] bg-[linear-gradient(180deg,#fafbfd_0%,#f2f4f9_30%,#d9deee_45%,#d6dcee_100%)] pl-[7px] text-[13.5px] text-[#111]">
      <svg width="19" height="18" viewBox="0 0 19 18" className="mr-[8.7px] shrink-0">
        <rect width="19" height="18" fill="#102010" />
        <rect y="0" width="19" height="3" fill="#1030a0" />
        <rect y="15" width="19" height="3" fill="#c02020" />
        <path d="M1 11l3-3 2 3 3-6 3 4 2-3 3 3" fill="none" stroke="#30e050" />
      </svg>
      {menus.map((m) => <span key={m[0]} className={m[1]}>{m[0]}</span>)}
      <div className="ml-auto flex h-full items-center gap-[2px] pr-px">
        {['–', '⧉', '×'].map((g) => (
          <div key={g} className="flex h-[27px] w-[22px] items-center justify-center border border-[#b9cbe0] bg-[#d9e6f3] text-[13px] font-bold text-[#556]">{g}</div>
        ))}
      </div>
    </div>
  );
}

function TitleBar() {
  return (
    <div className="relative flex h-[29px] shrink-0 items-center bg-[linear-gradient(90deg,#9eaec0_0%,#a6b5c6_26%,#b4c9df_38%,#b9d4ef_60%,#bfdcf7_78%,#1f4468_78.2%,#234a72_92.7%,#7d8fa3_92.8%)] pl-[2px] text-[14px] text-[#111]">
      <div className="absolute bottom-0 left-[810px] h-[9px] w-[690px] bg-[linear-gradient(90deg,#54708c00,#54708caa_40%,#3f5a75cc_85%,#bfdcf700)]" />
      <svg width="19" height="22" viewBox="0 0 19 22" className="relative shrink-0">
        <path d="M9 1c3 3 8 5 8 12 0 5-4 8-8 8s-8-3-8-8C1 8 6 6 9 1z" fill="#1a50c8" />
        <path d="M9 4c1 3 4 4 4 9 0 3-2 5-4 5-1-4-3-5-2-9 .5-2 1.5-3 2-5z" fill="#7ab0f0" />
      </svg>
      <span className="relative ml-[4px] whitespace-pre">TradeStation 8.1 - STOX_FIB - FIB Frame bassi - [Chart Analysis - GS:FTSEMIB  15 min  [MCEDB]  SPMIB FUTURES]</span>
      <div className="absolute right-[3px] top-0 flex h-[25px] overflow-hidden rounded-b-[3px] border border-t-0 border-[#d8e0e8]/70">
        <div className="flex w-[38px] items-end justify-center bg-[linear-gradient(180deg,#a8b8c6,#5a7086)] pb-[6px]"><div className="h-[4px] w-[16px] bg-white" /></div>
        <div className="flex w-[35px] items-center justify-center border-x border-[#d8e0e8]/60 bg-[linear-gradient(180deg,#a8b8c6,#5a7086)]">
          <div className="relative h-[11px] w-[11px] border-2 border-white"><div className="absolute -right-[4px] -top-[4px] h-[9px] w-[9px] border-r-2 border-t-2 border-white" /></div>
        </div>
        <div className="flex w-[64px] items-center justify-center bg-[linear-gradient(180deg,#d8907c,#b83a20)] text-[21px] font-bold leading-none text-white">X</div>
      </div>
    </div>
  );
}

function Scrollbar() {
  return (
    <div className="flex h-[23px] shrink-0 items-center bg-[#f0f0f0] pl-[8px]">
      <div className="h-0 w-0 border-y-[5px] border-r-[5px] border-y-transparent border-r-black" />
      <div className="ml-auto mr-[7px] flex items-center gap-[8px]">
        <div className="flex h-[18px] w-[18px] items-center justify-center gap-[2px] border border-[#909090] bg-[linear-gradient(180deg,#f4f4f4,#c4c4c4)]">
          <div className="h-[9px] w-px bg-[#666]" /><div className="h-[9px] w-px bg-[#666]" /><div className="h-[9px] w-px bg-[#666]" />
        </div>
        <div className="h-0 w-0 border-y-[5px] border-l-[5px] border-y-transparent border-l-[#333]" />
      </div>
    </div>
  );
}

const tabs = [
  ['STOX_TF60', 'w-[88px]'], ['STOX_TF120', 'w-[95px]'], ['STOX TF240', 'w-[91px]'], ['STOX _100', 'w-[84px]'], ['STOX_TF30', 'w-[88.6px]'],
  ['FIB_TF60', 'w-[74.4px]'], ['FIB_TF120', 'w-[82px]'], ['FIB TF240', 'w-[78px]'], ['FIB_100', 'w-[68px]'], ['FIB_TF30', 'w-[75px]'],
  ['BUND vs STOXX', 'w-[113.6px]'], ['FIB Frame bassi', 'w-[113px]'], ['FIB Giornaliero', 'w-[104px]'], ['STOXX frame bassi', 'w-[128.3px]'],
  ['STOXX giornaliero', 'w-[122px]'], ['No PREZZI', 'w-[83px]'], ['ANNUALE Indici', 'w-[113px]'],
];

function Tab({ label, w, active }) {
  return (
    <div className={`relative flex h-full shrink-0 items-center justify-center ${w}`}>
      {active && <div className="absolute inset-0 bg-white [clip-path:polygon(0_0,100%_0,calc(100%-6px)_100%,6px_100%)]" />}
      <svg className="absolute left-0 top-0 h-full w-[6px]" viewBox="0 0 6 17"><line x1="0" y1="0" x2="6" y2="17" stroke="#000" /></svg>
      <svg className="absolute right-0 top-0 h-full w-[6px]" viewBox="0 0 6 17"><line x1="6" y1="0" x2="0" y2="17" stroke="#000" /></svg>
      <div className="absolute inset-x-[6px] bottom-0 h-px bg-black" />
      <span className={`relative whitespace-pre text-[11.5px] text-black ${active ? 'font-bold' : ''}`}>{label}</span>
    </div>
  );
}

function TabBar() {
  return (
    <div className="flex h-[18px] shrink-0 border-t border-black bg-[#f0f0f0]">
      <div className="flex w-[71px] shrink-0 items-center pl-[1px]">
        {['|◂', '◂', '▸', '▸|'].map((g) => (
          <div key={g} className="flex h-full w-[17px] items-center justify-center border border-[#c0c0c0] bg-[linear-gradient(180deg,#fafafa,#d8d8d8)] text-[9px] text-[#555]">{g}</div>
        ))}
      </div>
      {tabs.map((t) => <Tab key={t[0]} label={t[0]} w={t[1]} active={t[0] === 'FIB Frame bassi'} />)}
    </div>
  );
}

const cells = [
  ['Acct:', 'w-[49px] border-transparent', ''], ['Open Psns:', 'w-[91px]', ''], ['DT BP:', 'w-[63px]', ''], ['Purch Pwr:', 'w-[87px]', ''],
  ['Closed P/L:', 'w-[94px]', ''], ['RT TE:', 'w-[59px]', ''], ['Open P/L:', 'w-[84px]', ''], ['ORDER BAR', 'w-[88px]', 'text-[#1a8a10]'], ['MACROS', 'w-[68px]', 'text-[#00905a]'],
];

function StatusBar() {
  return (
    <div className="flex h-[19px] shrink-0 items-center bg-[#f0eeee] pl-[2px] text-[14px] leading-none text-[#111]">
      <span className="flex-1">For Help, press F1</span>
      {cells.map((c) => (
        <div key={c[0]} className={`flex h-full shrink-0 items-center border-l border-[#d8d8d8] pl-[5px] ${c[1]} ${c[2]}`}>{c[0]}</div>
      ))}
      <div className="flex h-full w-[19px] shrink-0 items-center justify-center border-l border-[#d8d8d8]">
        <div className="h-[11px] w-[11px] rounded-full bg-[radial-gradient(circle_at_40%_30%,#ff9090,#e00000_50%,#700000)]" />
      </div>
      <div className="flex h-full w-[124px] shrink-0 items-center border-l border-[#d8d8d8] pl-[5px]">30/03/2022 09:04</div>
    </div>
  );
}

export default function App() {
  return (
    <div className="flex h-[1080px] w-[1920px] flex-col overflow-hidden bg-[#f0f0f0] font-['Noto_Sans',sans-serif]">
      <TitleBar />
      <MenuBar />
      <Toolbar />
      <div className="flex shrink-0 flex-col bg-black font-['Liberation_Sans',Arial,sans-serif]">
        <PricePane />
        <MacdPane />
        <CciPane />
        <TimeAxis />
      </div>
      <Scrollbar />
      <TabBar />
      <StatusBar />
      <div className="flex-1 bg-[#5a7088]" />
    </div>
  );
}
